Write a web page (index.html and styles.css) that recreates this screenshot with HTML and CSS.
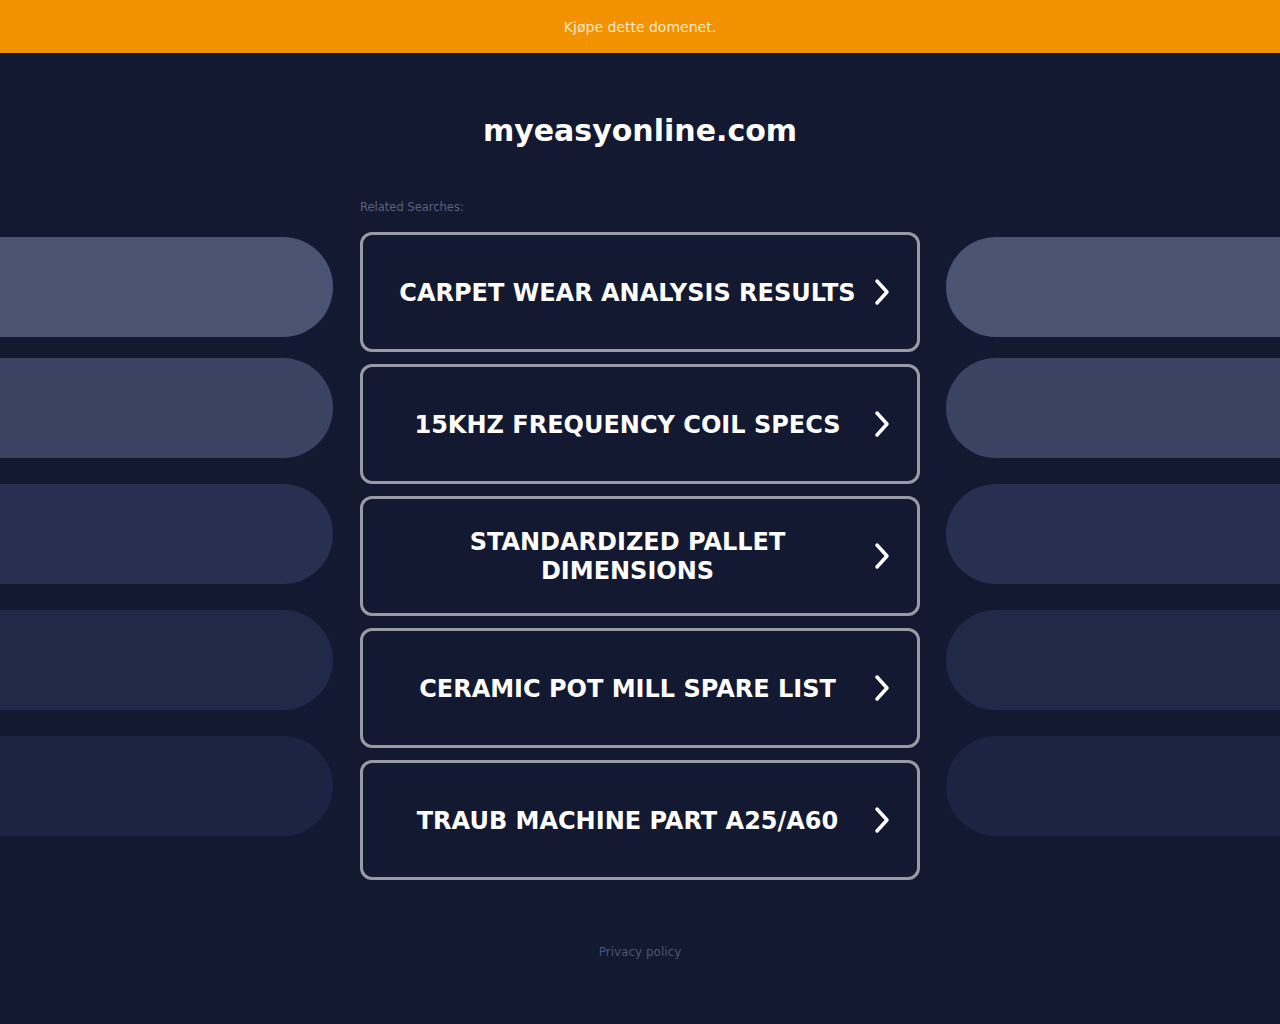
FILE: index.html
```html
<!DOCTYPE html>
<html lang="no">
<head>
  <meta charset="UTF-8" />
  <title>myeasyonline.com</title>
  <link rel="stylesheet" href="styles.css">
</head>
<body>
  <div class="topbar">
    <a href="#">Kjøpe dette domenet.</a>
  </div>

  <h1 class="domain">myeasyonline.com</h1>

  <div class="layout">
    <div class="side side-left">
      <div class="pill pill-1"></div>
      <div class="pill pill-2"></div>
      <div class="pill pill-3"></div>
      <div class="pill pill-4"></div>
      <div class="pill pill-5"></div>
    </div>

    <div class="center">
      <p class="related">Related Searches:</p>
      <a class="card" href="#">
        <span class="card-text">Carpet Wear Analysis Results</span>
        <svg class="chevron" viewBox="0 0 20 30"><path d="M5 4 L15 15 L5 26" /></svg>
      </a>
      <a class="card" href="#">
        <span class="card-text">15khz Frequency Coil Specs</span>
        <svg class="chevron" viewBox="0 0 20 30"><path d="M5 4 L15 15 L5 26" /></svg>
      </a>
      <a class="card" href="#">
        <span class="card-text">Standardized Pallet Dimensions</span>
        <svg class="chevron" viewBox="0 0 20 30"><path d="M5 4 L15 15 L5 26" /></svg>
      </a>
      <a class="card" href="#">
        <span class="card-text">Ceramic Pot Mill Spare List</span>
        <svg class="chevron" viewBox="0 0 20 30"><path d="M5 4 L15 15 L5 26" /></svg>
      </a>
      <a class="card" href="#">
        <span class="card-text">Traub Machine Part A25/A60</span>
        <svg class="chevron" viewBox="0 0 20 30"><path d="M5 4 L15 15 L5 26" /></svg>
      </a>
    </div>

    <div class="side side-right">
      <div class="pill pill-1"></div>
      <div class="pill pill-2"></div>
      <div class="pill pill-3"></div>
      <div class="pill pill-4"></div>
      <div class="pill pill-5"></div>
    </div>
  </div>

  <div class="footer">
    <a href="#">Privacy policy</a>
  </div>
</body>
</html>
```

FILE: styles.css
```css
body {
  margin: 0;
  background-color: #121930;
  font-family: "DejaVu Sans", Verdana, sans-serif;
  color: #fff;
}
a {
  text-decoration: none;
}
.topbar {
  height: 53px;
  background-color: #f39200;
  display: flex;
  align-items: center;
  justify-content: center;
}
.topbar a {
  color: #fde9cc;
  font-size: 14px;
}
.domain {
  margin: 60px 0 0;
  font-size: 30px;
  line-height: 36px;
  font-weight: bold;
  text-align: center;
  color: #fff;
}
.layout {
  display: grid;
  grid-template-columns: 333px 560px 1fr;
  column-gap: 27px;
  margin-top: 51px;
}
.side {
  display: flex;
  flex-direction: column;
  gap: 26px;
  padding-top: 37px;
}
.side-right {
  margin-left: -1px;
}
.side .pill-2 {
  margin-top: -5px;
}
.pill {
  height: 100px;
}
.side-left .pill {
  border-radius: 0 50px 50px 0;
}
.side-right .pill {
  border-radius: 50px 0 0 50px;
}
.pill-1 { background-color: #4a5472; }
.pill-2 { background-color: #3a4361; }
.pill-3 { background-color: #283051; }
.pill-4 { background-color: #212949; }
.pill-5 { background-color: #1c2343; }
.center {
  display: flex;
  flex-direction: column;
  gap: 12px;
}
.related {
  margin: 0 0 6px;
  font-size: 11.5px;
  line-height: 14px;
  color: #5a627d;
}
.card {
  height: 120px;
  box-sizing: border-box;
  border: 3px solid #989ba3;
  border-radius: 12px;
  display: flex;
  align-items: center;
  padding: 0 25px 0 30px;
  color: #fff;
}
.card-text {
  flex: 1;
  padding-top: 2px;
  text-align: center;
  text-transform: uppercase;
  font-weight: bold;
  font-size: 24px;
  line-height: 29px;
}
.chevron {
  width: 20px;
  height: 30px;
  margin-left: 10px;
  fill: none;
  stroke: #fff;
  stroke-width: 3.5;
  stroke-linecap: round;
  stroke-linejoin: round;
}
.footer {
  margin-top: 61px;
  text-align: center;
  padding-bottom: 40px;
}
.footer a {
  font-size: 12px;
  color: #4d5572;
}
```
